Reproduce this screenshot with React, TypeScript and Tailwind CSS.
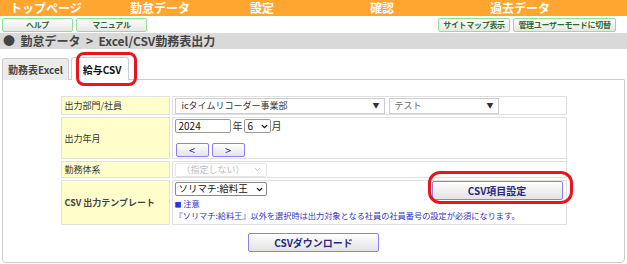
import { ChevronDown } from 'lucide-react';

const font = { fontFamily: '"Noto Sans CJK JP", "Noto Sans", sans-serif' };

function TopButton({ label, w }: { label: string; w: string }) {
  return (
    <button
      className={`${w} h-[14px] border border-[#8fe08f] rounded-[2px] bg-gradient-to-b from-white to-[#e6e6e6] text-[8px] tracking-[-0.3px] whitespace-nowrap font-bold text-[#2f6b2f] leading-none flex items-center justify-center`}
    >
      {label}
    </button>
  );
}

function NavButton({ label }: { label: string }) {
  return (
    <button className="w-[33px] h-[14px] border border-[#8a7ef0] rounded-[2px] bg-gradient-to-b from-white to-[#e4e4e4] text-[11px] leading-none text-[#2a2aa0] flex items-center justify-center">
      {label}
    </button>
  );
}

export default function App() {
  return (
    <div className="relative w-[627px] h-[264px] bg-white overflow-hidden text-[#333]" style={font}>
      {/* top menu */}
      <div className="h-[16px] bg-[#ffa630] flex items-center text-white font-bold text-[12px] leading-none">
        <span className="w-[129px] pl-[10px]">トップページ</span>
        <span className="w-[121px] pl-[1px]">勤怠データ</span>
        <span className="w-[120px]">設定</span>
        <span className="w-[120px]">確認</span>
        <span>過去データ</span>
      </div>

      {/* buttons */}
      <div className="h-[17px] flex items-center justify-between px-[2px] pt-[1px]">
        <div className="flex gap-[3px]">
          <TopButton label="ヘルプ" w="w-[71px]" />
          <TopButton label="マニュアル" w="w-[71px]" />
        </div>
        <div className="flex gap-[3px] pr-[9px]">
          <TopButton label="サイトマップ表示" w="w-[72px]" />
          <TopButton label="管理ユーザーモードに切替" w="w-[103px]" />
        </div>
      </div>

      {/* breadcrumb */}
      <div className="h-[16px] bg-[#d9d9d9] flex items-center pl-[3px] text-[12px] font-bold text-[#444] leading-none whitespace-pre">
        ●  勤怠データ  &gt;  Excel/CSV勤務表出力
      </div>

      {/* tabs */}
      <div className="mt-[8px] flex items-end pl-[2px] gap-[2px] h-[23px]">
        <div className="w-[67px] h-[22px] border border-b-0 border-[#ccc] rounded-t-[3px] bg-[#ececec] text-[10px] font-bold text-[#444] flex items-center justify-center">
          勤務表Excel
        </div>
        <div className="relative z-10 w-[58px] h-[23px] border border-b-0 border-[#ccc] rounded-t-[3px] bg-white text-[10px] font-bold text-[#111] flex items-center justify-center pl-[4px]">
          給与CSV
        </div>
      </div>

      {/* content box */}
      <div className="-mt-[1px] mx-[2px] h-[184px] border border-[#ccc] rounded-b-[4px] bg-white flex flex-col items-center">
        <table className="mt-[14px] w-[510px] border-separate border-spacing-[2px] text-[9px] leading-none">
          <tbody>
            <tr>
              <td className="w-[109px] h-[19px] bg-[#ffffcc] border border-[#e0e0e0] pl-[3px] text-[#333]">出力部門/社員</td>
              <td className="border border-[#e0e0e0] px-[2px]">
                <div className="flex gap-[4px]">
                  <div className="w-[210px] h-[16px] border border-[#ccc] flex items-center justify-between pl-[6px] pr-[4px] text-[#333]">
                    <span>icタイムリコーダー事業部</span>
                    <span className="text-[7px]">▼</span>
                  </div>
                  <div className="w-[110px] h-[16px] border border-[#ccc] flex items-center justify-between pl-[5px] pr-[4px] text-[#666]">
                    <span>テスト</span>
                    <span className="text-[7px] text-[#333]">▼</span>
                  </div>
                </div>
              </td>
            </tr>
            <tr>
              <td className="h-[42px] bg-[#ffffcc] border border-[#e0e0e0] pl-[3px]">出力年月</td>
              <td className="border border-[#e0e0e0] px-[2px] align-top">
                <div className="flex items-center mt-[1px] h-[14px]">
                  <div className="w-[56px] h-[14px] border border-[#999] rounded-[2px] pl-[3px] flex items-center text-[10px] text-[#111]">2024</div>
                  <span className="ml-[2px] text-[10px]">年</span>
                  <div className="ml-[1px] w-[27px] h-[14px] border border-[#999] rounded-[2px] flex items-center justify-between pl-[3px] pr-[1px] text-[10px] text-[#111]">
                    <span>6</span>
                    <ChevronDown size={9} strokeWidth={3.5} />
                  </div>
                  <span className="ml-[1px] text-[10px]">月</span>
                </div>
                <div className="flex gap-[3px] mt-[10px] ml-[1px]">
                  <NavButton label="<" />
                  <NavButton label=">" />
                </div>
              </td>
            </tr>
            <tr>
              <td className="h-[17px] bg-[#ffffcc] border border-[#e0e0e0] pl-[3px]">勤務体系</td>
              <td className="border border-[#e0e0e0] px-[2px]">
                <div className="w-[92px] h-[14px] border border-[#e6e6e6] rounded-[2px] flex items-center justify-between pl-[6px] pr-[4px] text-[#bbb]">
                  <span>（指定しない）</span>
                  <ChevronDown size={9} strokeWidth={2.5} />
                </div>
              </td>
            </tr>
            <tr>
              <td className="h-[45px] bg-[#ffffcc] border border-[#e0e0e0] pl-[3px] font-bold text-[#444]">CSV 出力テンプレート</td>
              <td className="border border-[#e0e0e0] px-[2px] align-top">
                <div className="flex items-start justify-between">
                  <div className="mt-[1px] w-[92px] h-[14px] border border-[#888] rounded-[2px] flex items-center justify-between pl-[3px] pr-[2px] text-[9.5px] text-[#111]">
                    <span>ソリマチ:給料王</span>
                    <ChevronDown size={9} strokeWidth={3.5} />
                  </div>
                  <button className="mr-[1px] w-[131px] h-[19px] border border-[#8a7ef0] rounded-[2px] bg-gradient-to-b from-white to-[#e2e2e2] text-[10px] font-bold text-[#2a2a80] flex items-center justify-center">
                    CSV項目設定
                  </button>
                </div>
                <div className="-mt-[2px] text-[#3333cc] text-[8.2px] leading-[11px]">
                  <div><span className="text-[7px]">■</span> 注意</div>
                  <div>『ソリマチ:給料王』以外を選択時は出力対象となる社員の社員番号の設定が必須になります。</div>
                </div>
              </td>
            </tr>
          </tbody>
        </table>
        <button className="mt-[6px] w-[131px] h-[19px] border border-[#8a7ef0] rounded-[2px] bg-gradient-to-b from-white to-[#e2e2e2] text-[10px] font-bold text-[#2a2a80] flex items-center justify-center">
          CSVダウンロード
        </button>
      </div>

      {/* annotations */}
      <div className="absolute left-[76px] top-[52px] w-[61px] h-[34px] border-[3px] border-[#e8141e] rounded-[8px] z-20" />
      <div className="absolute left-[428px] top-[171px] w-[145px] h-[33px] border-[3px] border-[#e8141e] rounded-[12px] z-20" />
    </div>
  );
}
